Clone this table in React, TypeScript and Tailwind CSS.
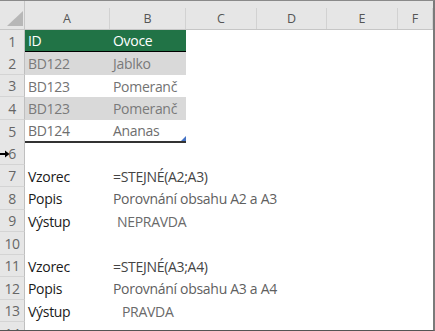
const cols = "grid grid-cols-[25px_85px_76px_71px_70px_71px_1fr]";

type Row = {
  n: number;
  a?: string;
  b?: string;
  kind?: "head" | "band" | "plain" | "last" | "label";
  indent?: string;
  bTone?: string;
};

const rows: Row[] = [
  { n: 1, a: "ID", b: "Ovoce", kind: "head" },
  { n: 2, a: "BD122", b: "Jablko", kind: "band" },
  { n: 3, a: "BD123", b: "Pomeranč", kind: "plain" },
  { n: 4, a: "BD123", b: "Pomeranč", kind: "band" },
  { n: 5, a: "BD124", b: "Ananas", kind: "last" },
  { n: 6 },
  { n: 7, a: "Vzorec", b: "=STEJNÉ(A2;A3)", kind: "label", bTone: "text-[#444]" },
  { n: 8, a: "Popis", b: "Porovnání obsahu A2 a A3", kind: "label", bTone: "text-[#5f5f5f]" },
  { n: 9, a: "Výstup", b: "NEPRAVDA", kind: "label", indent: "pl-[7px]", bTone: "text-[#6a6a6a]" },
  { n: 10 },
  { n: 11, a: "Vzorec", b: "=STEJNÉ(A3;A4)", kind: "label", bTone: "text-[#444]" },
  { n: 12, a: "Popis", b: "Porovnání obsahu A3 a A4", kind: "label", bTone: "text-[#5f5f5f]" },
  { n: 13, a: "Výstup", b: "PRAVDA", kind: "label", indent: "pl-[12px]", bTone: "text-[#6a6a6a]" },
  { n: 14 },
];

function Cell({ row, col }: { row: Row; col: "a" | "b" }) {
  const text = row[col];
  const k = row.kind;
  let box = "";
  let tone = "text-[#737373]";
  if (k === "head") {
    box = "bg-[#217346] border-b-2 border-black";
    tone = "text-white";
  } else if (k === "band") {
    box = "bg-[#d9d9d9]";
    tone = "text-[#7a7a7a]";
  } else if (k === "last") {
    box = "border-b-2 border-[#333]";
    tone = "text-[#6e6e6e]";
  } else if (k === "label") {
    tone = col === "a" ? "text-[#1a1a1a]" : row.bTone ?? "";
  }
  const pad = col === "b" && row.indent ? row.indent : "pl-[3px]";
  return (
    <div className={`relative flex items-center whitespace-nowrap text-[14px] tracking-[-0.3px] ${box} ${tone} ${pad}`}>
      {text}
      {k === "last" && col === "b" && (
        <span className="absolute right-0 bottom-0 w-0 h-0 border-l-[5px] border-l-transparent border-b-[5px] border-b-[#4472c4]" />
      )}
    </div>
  );
}

export default function App() {
  return (
    <div className="w-[435px] h-[331px] overflow-hidden bg-white border-t border-[#8a8a8a] border-r-2 border-r-[#7a7a7a] border-b border-b-[#555] font-['Open_Sans',sans-serif] text-[13px]">
      {/* column headers */}
      <div className={`${cols} h-[29px] bg-[#e6e6e6] border-b border-[#c6c6c6] text-[12.5px] text-[#555]`}>
        <div className="flex items-end justify-end pr-[1px] pb-[2px] border-r border-[#c6c6c6]">
          <svg width="17" height="16" viewBox="0 0 17 16">
            <polygon points="17,0 17,15 1,15" fill="#b7b7b7" />
          </svg>
        </div>
        {["A", "B", "C", "D", "E", "F"].map((c) => (
          <div key={c} className="flex items-end">
            <div className="h-[21px] w-full border-r border-[#d2d2d2] flex items-center justify-center pt-[2px]">
              {c}
            </div>
          </div>
        ))}
      </div>

      {rows.map((row) => (
        <div key={row.n} className={`${cols} ${row.n % 2 === 1 ? "h-[22px]" : "h-[23px]"}`}>
          <div className="relative flex items-center justify-center bg-[#e6e6e6] border-r border-r-[#bfbfbf] border-b border-b-[#d4d4d4] text-[#666] text-[14px] tracking-[-0.5px]">
            {row.n}
            {row.n === 6 && (
              <svg className="absolute left-0 top-[8px]" width="10" height="8" viewBox="0 0 10 8">
                <path d="M0 3h5V0.5L9.5 4 5 7.5V5H0z" fill="#000" />
              </svg>
            )}
          </div>
          <Cell row={row} col="a" />
          <Cell row={row} col="b" />
          <div />
          <div />
          <div />
          <div />
        </div>
      ))}
    </div>
  );
}
